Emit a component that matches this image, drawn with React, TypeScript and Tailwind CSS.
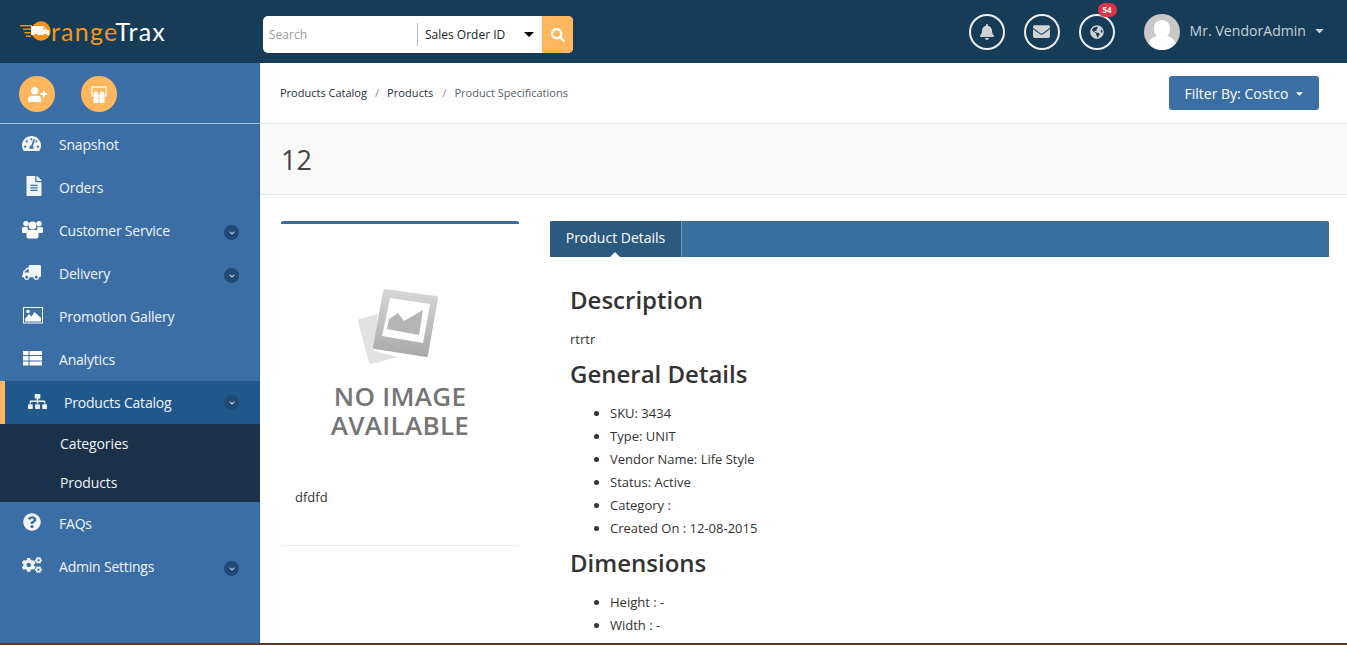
import React from "react";
import {
  FaBell, FaEnvelope, FaGlobeAmericas, FaSearch, FaUserPlus, FaTachometerAlt, FaFileAlt, FaTruck,
  FaSitemap, FaQuestionCircle, FaCogs, FaChevronDown, FaCaretDown,
} from "react-icons/fa";

function Logo() {
  return (
    <div className="flex items-center w-[243px] pl-[20px] -mt-[1px]">
      <svg width="31" height="20" viewBox="0 0 31 20" className="shrink-0">
        <g fill="#f7941d">
          <rect x="0" y="4" width="12" height="1.4" />
          <rect x="3" y="7.5" width="9" height="1.4" />
          <rect x="4.5" y="11" width="7" height="1.4" />
          <rect x="6" y="14.5" width="5" height="1.4" />
          <circle cx="21" cy="10" r="9.7" />
        </g>
        <path d="M11 5h12l4 3.5 2.4 1v4.5H11z" fill="#fff" opacity="0.92" />
        <path d="M23.3 6.2l2.4 2.3h-2.4z" fill="#f7941d" />
        <circle cx="16" cy="14.5" r="1.8" fill="#f7941d" />
        <circle cx="25" cy="14.5" r="1.8" fill="#f7941d" />
      </svg>
      <span className="text-[25px] leading-none font-['Lato',sans-serif] tracking-[1.2px]">
        <span className="text-[#f7941d]">range</span>
        <span className="text-white">Trax</span>
      </span>
    </div>
  );
}

function Circle({ children, badge }: { children: React.ReactNode; badge?: string }) {
  return (
    <div className="relative w-[36px] h-[36px] rounded-full border-2 border-[#eeeeee] flex items-center justify-center text-[#cfd3d6]">
      {children}
      {badge && (
        <span className="absolute -top-[13px] left-[17px] w-[19px] h-[14px] rounded-full bg-[#dc3545] text-white text-[8px] font-bold leading-[14px] text-center">
          {badge}
        </span>
      )}
    </div>
  );
}

function Header() {
  return (
    <header className="h-[63px] shrink-0 bg-[#163c57] flex items-center">
      <Logo />
      <div className="w-[310px] h-[37px] ml-[20px] mt-[6px] bg-white rounded-[5px] flex items-center overflow-hidden">
        <span className="w-[154px] pl-[6px] text-[12px] text-[#999999]">Search</span>
        <div className="flex-1 h-[23px] border-l border-[#bbbbbb] pl-[7px] flex items-center text-[12px] text-[#222222]">
          Sales Order ID
          <span className="ml-[19px] w-0 h-0 border-x-[5px] border-x-transparent border-t-[5px] border-t-black" />
        </div>
        <div className="w-[31px] h-full bg-[#ffb65c] flex items-center justify-center text-white text-[14px]">
          <FaSearch />
        </div>
      </div>
      <div className="ml-auto flex items-center pr-[21px]">
        <div className="flex gap-[19px] mr-[29px]">
          <Circle><FaBell className="text-[16px]" /></Circle>
          <Circle><FaEnvelope className="text-[17px]" /></Circle>
          <Circle badge="54"><FaGlobeAmericas className="text-[14px]" /></Circle>
        </div>
        <div className="w-[36px] h-[36px] rounded-full bg-[#c8c8c8] overflow-hidden relative">
          <div className="absolute left-[10px] top-[6px] w-[16px] h-[18px] rounded-full bg-white" />
          <div className="absolute left-[4px] top-[22px] w-[28px] h-[20px] rounded-full bg-white" />
        </div>
        <span className="ml-[10px] -mt-[3px] text-[14px] text-[#c9d2d9] tracking-[0.05px]">Mr. VendorAdmin</span>
        <FaCaretDown className="ml-[7px] -mt-[3px] text-[13px] text-[#c9d2d9]" />
      </div>
    </header>
  );
}

function UsersIcon({ className }: { className?: string }) {
  return (
    <svg className={className} width="21" height="19" viewBox="0 0 21 19" fill="#fff">
      <circle cx="4" cy="3.6" r="2.7" />
      <circle cx="17" cy="3.6" r="2.7" />
      <circle cx="10.5" cy="5.5" r="3.9" />
      <path d="M0 8.5C0 7.3 1 7 2 7h3.5l.5 2.5C5 10.5 4.5 12 4.5 13H1.5C.6 13 0 12.5 0 11.5z" />
      <path d="M21 8.5C21 7.3 20 7 19 7h-3.5l-.5 2.5c1 1 1.5 2.5 1.5 3.5h3c.9 0 1.5-.5 1.5-1.5z" />
      <path d="M6 10h9c.8 0 1.5 1 1.5 3v3.5c0 1.2-.8 2-2 2h-8c-1.2 0-2-.8-2-2V13c0-2 .7-3 1.5-3z" />
    </svg>
  );
}

function PictureIcon({ className }: { className?: string }) {
  return (
    <svg className={className} width="20" height="17" viewBox="0 0 20 17" fill="none">
      <rect x="0.5" y="0.5" width="19" height="15.5" stroke="#fff" strokeWidth="1" />
      <path d="M2 14.5v-2.5l4-5 2.5 2.5 3-4.5 6.5 6v3.5z" fill="#fff" />
      <circle cx="5" cy="4.5" r="1.8" fill="#fff" />
    </svg>
  );
}

function TableIcon({ className }: { className?: string }) {
  return (
    <svg className={className} width="19" height="15" viewBox="0 0 19 15" fill="#fff">
      <rect x="0" y="0" width="5.5" height="4" />
      <rect x="6.5" y="0" width="12.5" height="4" />
      <rect x="0" y="5" width="5.5" height="4.5" />
      <rect x="6.5" y="5" width="12.5" height="4.5" />
      <rect x="0" y="10.5" width="5.5" height="4" />
      <rect x="6.5" y="10.5" width="12.5" height="4" />
    </svg>
  );
}

function FlipTruck({ className }: { className?: string }) {
  return <FaTruck className={`-scale-x-100 ${className ?? ""}`} />;
}

type Item = { label: string; Icon: React.ComponentType<{ className?: string }>; arrow?: boolean; size: string };

function Arrow() {
  return (
    <span className="absolute left-[224px] top-[16px] w-[15px] h-[15px] rounded-full bg-[#1f4a73] flex items-center justify-center text-[#d5dde5]">
      <FaChevronDown className="text-[6px]" />
    </span>
  );
}

function NavItem({ item }: { item: Item }) {
  const { Icon } = item;
  return (
    <div className="relative h-[43px] flex items-center text-[14px] text-[#f1f5f8] -tracking-[0.2px]">
      <span className="w-[59px] pl-[22px] flex items-center -mt-[3px]">
        <Icon className={item.size} />
      </span>
      <span>{item.label}</span>
      {item.arrow && <Arrow />}
    </div>
  );
}

const topItems: Item[] = [
  { label: "Snapshot", Icon: FaTachometerAlt, size: "text-[19px]" },
  { label: "Orders", Icon: FaFileAlt, size: "text-[20px] ml-[2px]" },
  { label: "Customer Service", Icon: UsersIcon, arrow: true, size: "" },
  { label: "Delivery", Icon: FlipTruck, arrow: true, size: "text-[19px]" },
  { label: "Promotion Gallery", Icon: PictureIcon, size: "ml-[1px]" },
  { label: "Analytics", Icon: TableIcon, size: "ml-[1px]" },
];

function Sidebar() {
  return (
    <aside className="w-[260px] shrink-0 bg-[#3a6ea5] shadow-[inset_-1px_0_0_#33628f] flex flex-col">
      <div className="h-[61px] shrink-0 border-b border-[#a6c2dc] flex items-start gap-[26px] pl-[19px] pt-[13px]">
        <div className="w-[36px] h-[36px] rounded-full bg-[#ffb65c] flex items-center justify-center text-white text-[19px]">
          <FaUserPlus />
        </div>
        <div className="w-[36px] h-[36px] rounded-full bg-[#ffb65c] flex items-center justify-center text-white">
          <svg width="16" height="17" viewBox="0 0 16 17" fill="none">
            <rect x="1" y="1" width="14" height="9" stroke="#fff" strokeWidth="1.3" />
            <circle cx="5" cy="8" r="2.4" fill="#fff" />
            <circle cx="11" cy="8" r="2.4" fill="#fff" />
            <path d="M2.5 17v-5a2 2 0 0 1 2-2h7a2 2 0 0 1 2 2v5z" fill="#fff" />
            <rect x="7.6" y="10" width="0.8" height="7" fill="#ffb65c" />
          </svg>
        </div>
      </div>
      <div className="-mt-[1px]">
        {topItems.map((it) => <NavItem key={it.label} item={it} />)}
      </div>
      <div className="relative h-[43px] shrink-0 bg-[#20588c] border-l-[5px] border-[#ffb65c] flex items-center text-[14px] text-[#f1f5f8] -tracking-[0.2px]">
        <span className="w-[59px] pl-[23px] flex items-center -mt-[2px]"><FaSitemap className="text-[19px]" /></span>
        <span>Products Catalog</span>
        <span className="absolute left-[219px] top-[14px] w-[15px] h-[15px] rounded-full bg-[#1f4a73] flex items-center justify-center text-[#d5dde5]">
          <FaChevronDown className="text-[6px]" />
        </span>
      </div>
      <div className="h-[78px] shrink-0 bg-[#1a3149] pl-[60px] text-[14px] text-[#f1f5f8] -tracking-[0.1px]">
        <div className="h-[39px] flex items-center">Categories</div>
        <div className="h-[39px] flex items-center">Products</div>
      </div>
      <NavItem item={{ label: "FAQs", Icon: FaQuestionCircle, size: "text-[18px] ml-[1px]" }} />
      <NavItem item={{ label: "Admin Settings", Icon: FaCogs, arrow: true, size: "text-[20px]" }} />
    </aside>
  );
}

function NoImage() {
  return (
    <div className="flex flex-col items-center mt-[65px]">
      <svg width="82" height="76" viewBox="0 0 82 76" className="-ml-[4px]">
        <defs>
          <linearGradient id="g" x1="0" y1="0" x2="0" y2="1">
            <stop offset="0" stopColor="#d8d8d8" />
            <stop offset="1" stopColor="#a8a8a8" />
          </linearGradient>
        </defs>
        <path d="M2 30l19-5-4 37 24 6-27 7a2 2 0 0 1-2-1L1 32z" fill="#e2e2e2" />
        <path d="M28 0l51 7q2 0 2 2l-10 57q0 2-2 2L18 60q-2 0-2-2l10-56q0-2 2-2z" fill="url(#g)" />
        <path d="M33 9l40 6-7 39-41-7z" fill="#fff" />
        <path d="M30 40l2-10 9-6 6 8 19-11-4 25z" fill="#b5b5b5" />
      </svg>
      <div className="mt-[17px] text-center text-[26px] leading-[29px] font-semibold text-[#757575] tracking-[0.3px]">
        NO IMAGE<br />AVAILABLE
      </div>
    </div>
  );
}

function Bullets({ items }: { items: string[] }) {
  return (
    <ul className="list-disc pl-[40px] text-[13px] text-[#333333] leading-[23px]">
      {items.map((t) => <li key={t}>{t}</li>)}
    </ul>
  );
}

function Main() {
  return (
    <main className="flex-1 min-w-0 bg-white overflow-hidden flex flex-col">
      <div className="h-[61px] shrink-0 border-b border-[#e8e8e8] flex items-start pl-[20px] pr-[28px]">
        <div className="mt-[22px] text-[11px] text-[#222d3a] flex">
          <span>Products Catalog</span>
          <span className="mx-[8px] text-[#888888]">/</span>
          <span className="tracking-[0.1px]">Products</span>
          <span className="mx-[8px] ml-[9px] text-[#888888]">/</span>
          <span className="text-[#555e6b]">Product Specifications</span>
        </div>
        <div className="ml-auto mt-[13px] w-[150px] h-[34px] rounded-[3px] bg-[#3a6ea5] text-white text-[14px] pl-[2px] flex items-center justify-center gap-[6px]">
          Filter By: Costco
          <FaCaretDown className="text-[11px]" />
        </div>
      </div>
      <div className="h-[71px] shrink-0 bg-[#f9f9f9] border-b border-[#e6e6e6] pl-[21px] pt-[18px] text-[27px] leading-[36px] font-medium text-[#444444]">
        12
      </div>
      <div className="flex pt-[26px] pl-[21px] pr-[18px]">
        <div className="w-[238px] h-[325px] shrink-0 border-t-[3px] border-b border-t-[#376f9e] border-b-[#eeeeee] rounded-[2px]">
          <NoImage />
          <div className="mt-[48px] pl-[14px] text-[13px] text-[#333333]">dfdfd</div>
        </div>
        <div className="flex-1 ml-[31px]">
          <div className="h-[36px] bg-[#376f9e] rounded-t-[2px] flex">
            <div className="relative w-[132px] h-full bg-[#2b5a80] border-r border-[#6f98ba] rounded-tl-[2px] flex items-center justify-center text-white text-[14px] pb-[4px]">
              Product Details
              <span className="absolute bottom-0 left-[60px] w-0 h-0 border-x-[5px] border-x-transparent border-b-[5px] border-b-white" />
            </div>
          </div>
          <div className="pl-[20px] text-[#333333]">
            <h2 className="mt-[26px] text-[24px] leading-[34px] font-semibold text-[#333333]">Description</h2>
            <p className="mt-[12px] text-[13px] leading-[20px]">rtrtr</p>
            <h2 className="mt-[8px] mb-[11px] text-[24px] leading-[34px] font-semibold">General Details</h2>
            <Bullets items={["SKU: 3434", "Type: UNIT", "Vendor Name: Life Style", "Status: Active", "Category :", "Created On : 12-08-2015"]} />
            <h2 className="mt-[6px] mb-[11px] text-[24px] leading-[34px] font-semibold">Dimensions</h2>
            <Bullets items={["Height : -", "Width : -"]} />
          </div>
        </div>
      </div>
    </main>
  );
}

export default function App() {
  return (
    <div className="h-[645px] overflow-hidden flex flex-col font-['Open_Sans',sans-serif]">
      <Header />
      <div className="flex-1 min-h-0 flex">
        <Sidebar />
        <Main />
      </div>
      <div className="h-[2px] shrink-0 bg-[#5a3a2a]" />
    </div>
  );
}
